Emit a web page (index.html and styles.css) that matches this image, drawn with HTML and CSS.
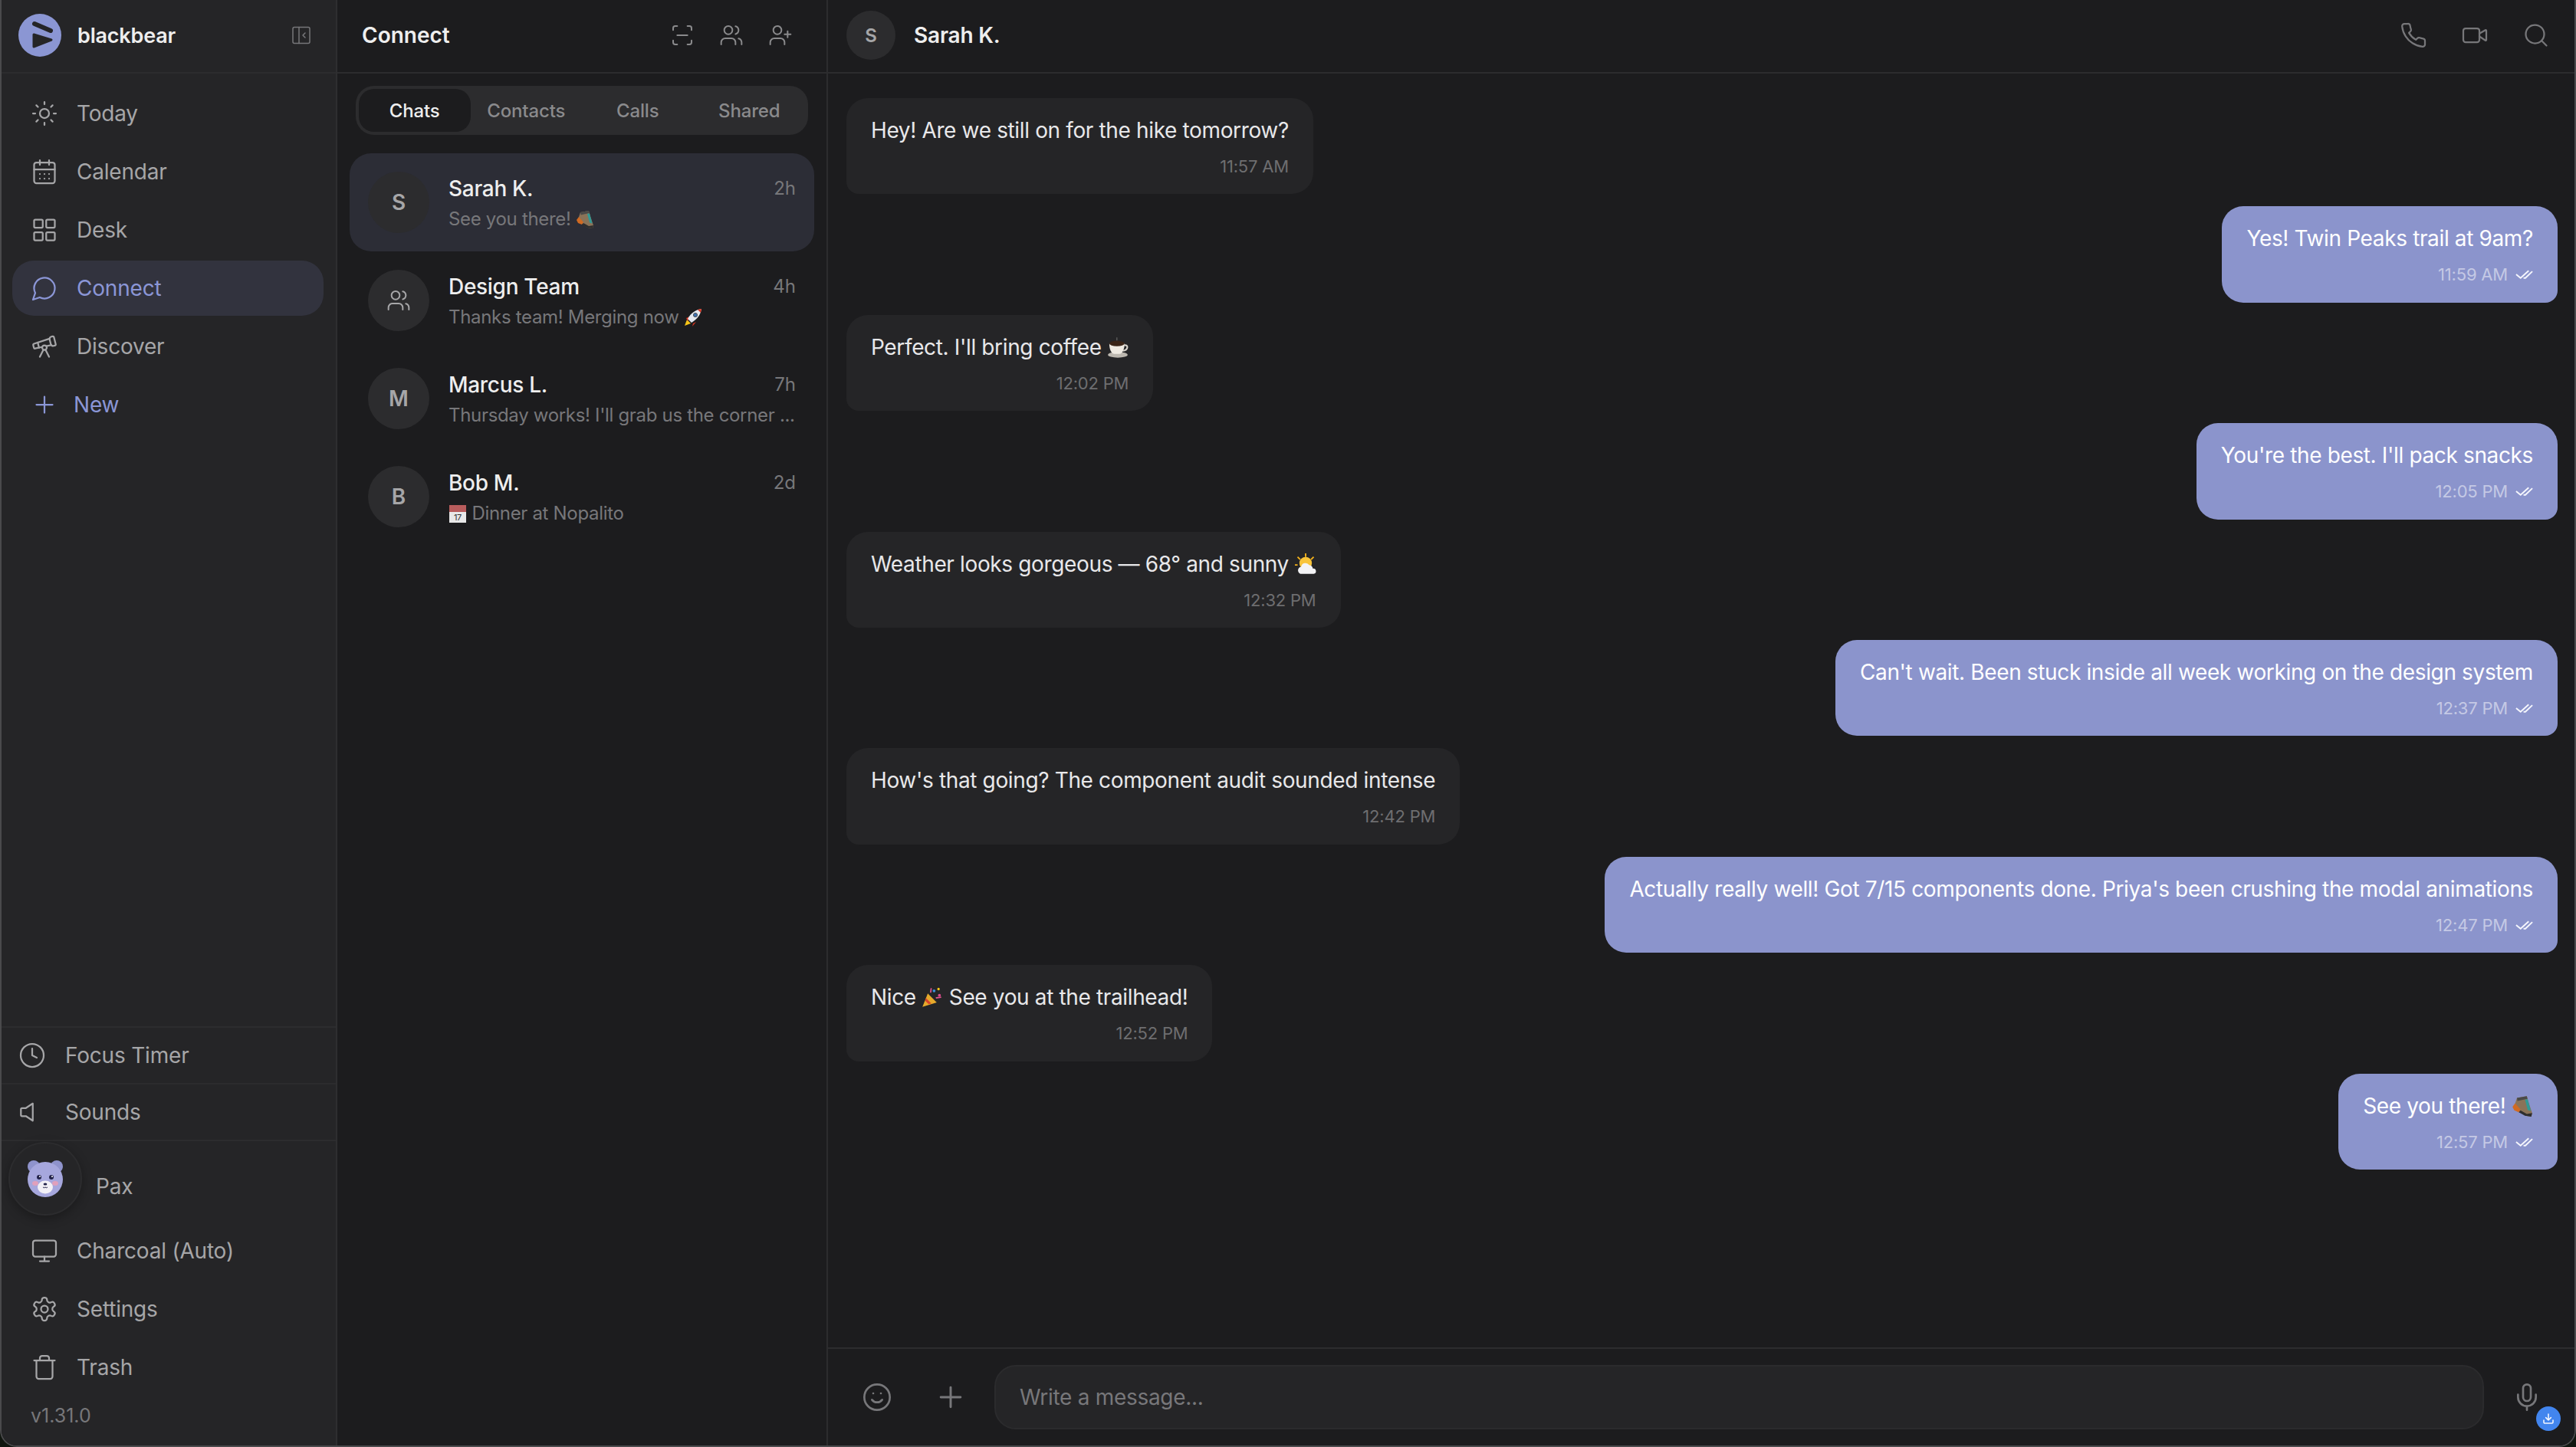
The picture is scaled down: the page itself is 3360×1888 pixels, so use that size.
FILE: index.html
```html
<!DOCTYPE html>
<html lang="en">

<head>
    <meta charset="UTF-8">
    <title>blackbear</title>
    <link rel="stylesheet" href="styles.css">
</head>

<body>
    <!-- icon sprite -->
    <svg class="sprite" xmlns="http://www.w3.org/2000/svg">
        <symbol id="i-sun" viewBox="0 0 24 24"><circle cx="12" cy="12" r="4"/><path d="M12 2v2M12 20v2M4.93 4.93l1.41 1.41M17.66 17.66l1.41 1.41M2 12h2M20 12h2M6.34 17.66l-1.41 1.41M19.07 4.93l-1.41 1.41"/></symbol>
        <symbol id="i-calendar" viewBox="0 0 24 24"><path d="M8 2v4M16 2v4M3 10h18"/><rect x="3" y="4" width="18" height="18" rx="2"/><path d="M8 14h.01M12 14h.01M16 14h.01M8 18h.01M12 18h.01M16 18h.01"/></symbol>
        <symbol id="i-grid" viewBox="0 0 24 24"><rect x="3" y="3" width="7.5" height="7" rx="1"/><rect x="13.5" y="3" width="7.5" height="7" rx="1"/><rect x="3" y="14" width="7.5" height="7" rx="1"/><rect x="13.5" y="14" width="7.5" height="7" rx="1"/></symbol>
        <symbol id="i-chat" viewBox="0 0 24 24"><path d="M7.9 20A9 9 0 1 0 4 16.1L2 22Z"/></symbol>
        <symbol id="i-telescope" viewBox="0 0 24 24"><path d="m10.065 12.493-6.18 1.318a.934.934 0 0 1-1.108-.702l-.537-2.15a1.07 1.07 0 0 1 .691-1.265l13.504-4.44"/><path d="m13.56 11.747 4.332-.924"/><path d="m16 21-3.105-6.21"/><path d="M16.485 5.94a2 2 0 0 1 1.455-2.425l1.09-.272a1 1 0 0 1 1.212.727l1.515 6.06a1 1 0 0 1-.727 1.213l-1.09.272a2 2 0 0 1-2.425-1.455z"/><path d="m6.158 8.633 1.114 4.456"/><path d="m8 21 3.105-6.21"/><circle cx="12" cy="13" r="2"/></symbol>
        <symbol id="i-plus" viewBox="0 0 24 24"><path d="M5 12h14M12 5v14"/></symbol>
        <symbol id="i-clock" viewBox="0 0 24 24"><circle cx="12" cy="12" r="10"/><path d="M12 6v6l4 2"/></symbol>
        <symbol id="i-speaker" viewBox="0 0 24 24"><path d="M12.5 4.5 6.5 8.5H3.2a1 1 0 0 0-1 1v5a1 1 0 0 0 1 1h3.3l6 4z"/></symbol>
        <symbol id="i-monitor" viewBox="0 0 24 24"><rect x="2" y="3" width="20" height="14" rx="2"/><path d="M8 21h8M12 17v4"/></symbol>
        <symbol id="i-settings" viewBox="0 0 24 24"><path d="M12.22 2h-.44a2 2 0 0 0-2 2v.18a2 2 0 0 1-1 1.73l-.43.25a2 2 0 0 1-2 0l-.15-.08a2 2 0 0 0-2.73.73l-.22.38a2 2 0 0 0 .73 2.73l.15.1a2 2 0 0 1 1 1.72v.51a2 2 0 0 1-1 1.74l-.15.09a2 2 0 0 0-.73 2.73l.22.38a2 2 0 0 0 2.73.73l.15-.08a2 2 0 0 1 2 0l.43.25a2 2 0 0 1 1 1.73V20a2 2 0 0 0 2 2h.44a2 2 0 0 0 2-2v-.18a2 2 0 0 1 1-1.73l.43-.25a2 2 0 0 1 2 0l.15.08a2 2 0 0 0 2.73-.73l.22-.39a2 2 0 0 0-.73-2.73l-.15-.08a2 2 0 0 1-1-1.74v-.5a2 2 0 0 1 1-1.74l.15-.09a2 2 0 0 0 .73-2.73l-.22-.38a2 2 0 0 0-2.73-.73l-.15.08a2 2 0 0 1-2 0l-.43-.25a2 2 0 0 1-1-1.73V4a2 2 0 0 0-2-2z"/><circle cx="12" cy="12" r="3"/></symbol>
        <symbol id="i-trash" viewBox="0 0 24 24"><path d="M3 6h18M19 6v14a2 2 0 0 1-2 2H7a2 2 0 0 1-2-2V6M8 6V4a2 2 0 0 1 2-2h4a2 2 0 0 1 2 2v2"/></symbol>
        <symbol id="i-collapse" viewBox="0 0 24 24"><rect x="1" y="1.5" width="22" height="21" rx="2"/><path d="M9 1.5v21M17 9l-3 3 3 3"/></symbol>
        <symbol id="i-scan" viewBox="0 0 24 24"><path d="M3 7V5a2 2 0 0 1 2-2h2M17 3h2a2 2 0 0 1 2 2v2M21 17v2a2 2 0 0 1-2 2h-2M7 21H5a2 2 0 0 1-2-2v-2M7 12h10"/></symbol>
        <symbol id="i-users" viewBox="0 0 24 24"><path d="M16 21v-2a4 4 0 0 0-4-4H6a4 4 0 0 0-4 4v2"/><circle cx="9" cy="7" r="4"/><path d="M22 21v-2a4 4 0 0 0-3-3.87M16 3.13a4 4 0 0 1 0 7.75"/></symbol>
        <symbol id="i-user-plus" viewBox="0 0 24 24"><path d="M16 21v-2a4 4 0 0 0-4-4H6a4 4 0 0 0-4 4v2"/><circle cx="9" cy="7" r="4"/><path d="M19 8v6M22 11h-6"/></symbol>
        <symbol id="i-phone" viewBox="0 0 24 24"><path d="M22 16.92v3a2 2 0 0 1-2.18 2 19.79 19.79 0 0 1-8.63-3.07 19.5 19.5 0 0 1-6-6 19.79 19.79 0 0 1-3.07-8.67A2 2 0 0 1 4.11 2h3a2 2 0 0 1 2 1.72 12.84 12.84 0 0 0 .7 2.81 2 2 0 0 1-.45 2.11L8.09 9.91a16 16 0 0 0 6 6l1.27-1.27a2 2 0 0 1 2.11-.45 12.84 12.84 0 0 0 2.81.7A2 2 0 0 1 22 16.92z"/></symbol>
        <symbol id="i-video" viewBox="0 0 24 24"><path d="m16 13 5.223 3.482a.5.5 0 0 0 .777-.416V7.87a.5.5 0 0 0-.752-.432L16 10.5"/><rect x="2" y="6" width="14" height="12" rx="2"/></symbol>
        <symbol id="i-search" viewBox="0 0 24 24"><circle cx="11" cy="11" r="8"/><path d="m21 21-4.3-4.3"/></symbol>
        <symbol id="i-smile" viewBox="0 0 24 24"><circle cx="12" cy="12" r="10"/><path d="M8 14s1.5 2 4 2 4-2 4-2M9 9h.01M15 9h.01"/></symbol>
        <symbol id="i-mic" viewBox="0 0 24 24"><path d="M12 2a3 3 0 0 0-3 3v7a3 3 0 0 0 6 0V5a3 3 0 0 0-3-3Z"/><path d="M19 10v2a7 7 0 0 1-14 0v-2M12 19v3"/></symbol>
        <symbol id="i-checks" viewBox="0 0 24 14"><path d="M1 7l6 5L18 2M11 12h2.5L23 3"/></symbol>
        <symbol id="i-download" viewBox="0 0 24 24"><path d="M21 15v4a2 2 0 0 1-2 2H5a2 2 0 0 1-2-2v-4M7 10l5 5 5-5M12 15V3"/></symbol>

        <!-- small picture emoji -->
        <symbol id="e-boot" viewBox="0 0 24 24">
            <path d="M6 3l11-2 2 7 4 12-1 4-7-1L3 14 4 9z" fill="#8a7358"/>
            <path d="M6 3l11-2 .8 3L6.5 6.5z" fill="#4a4a48"/>
            <path d="M15 5l3-.5 3.5 13-3.5-1z" fill="#2f9a96"/>
            <path d="M4 9 1 13l2 4 5 2 2-3z" fill="#d06a22"/>
            <path d="M8 19l7 4 7 1 1-4-6 1-7-4z" fill="#2e2e2e"/>
        </symbol>
        <symbol id="e-rocket" viewBox="0 0 24 24">
            <path d="M1 23l3-8 5 5z" fill="#f5c518"/>
            <path d="M3 13l5-2-3 6zM12 20l-1 4 5-6z" fill="#d8331f"/>
            <path d="M5 14C9 6 16 2 23 1c-1 7-5 13-13 18z" fill="#e4e8f0"/>
            <path d="M18 2l5-1-1 5z" fill="#d8331f"/>
            <circle cx="15" cy="9" r="2.6" fill="#3c6fb0" stroke="#555" stroke-width="1"/>
        </symbol>
        <symbol id="e-calendar" viewBox="0 0 24 24">
            <rect x="1" y="1" width="22" height="23" fill="#e8e8e8"/>
            <rect x="1" y="1" width="22" height="9" fill="#b85c5c"/>
            <text x="12" y="21" font-size="11" font-family="Inter, sans-serif" fill="#333" text-anchor="middle">17</text>
        </symbol>
        <symbol id="e-coffee" viewBox="0 0 24 24">
            <ellipse cx="12" cy="20.5" rx="11" ry="3.2" fill="#bdb8b0"/>
            <path d="M2.5 8h17c0 7-2.500 11.500-5.500 11.500H8C5 19.500 2.500 15 2.500 8z" fill="#efeae2"/>
            <ellipse cx="11" cy="8" rx="8.500" ry="3" fill="#3a2417"/>
            <path d="M19 10c5-1.500 5 5-1 6" fill="none" stroke="#d8d3cb" stroke-width="1.800"/>
            <path d="M11 4.500V1" stroke="#666" stroke-width="1"/>
        </symbol>
        <symbol id="e-sun-cloud" viewBox="0 0 24 24">
            <path d="M12 0v4M3 4l3 3M21 4l-3 3M0 13h3" stroke="#f5b21a" stroke-width="1.6"/>
            <circle cx="12" cy="11" r="7" fill="#f8c43a"/>
            <path d="M8 23a4 4 0 0 1-1-8 5 5 0 0 1 9-2 4.5 4.5 0 0 1 4 4 3 3 0 0 1 1 6z" fill="#f3f3f5"/>
        </symbol>
        <symbol id="e-party" viewBox="0 0 24 24">
            <path d="M1 23l6-15 10 10z" fill="#e6a92b"/>
            <path d="M5 13l6 6-3 1-4-4z" fill="#d8432a"/>
            <circle cx="14" cy="5" r="1.6" fill="#3c8fd8"/>
            <circle cx="20" cy="10" r="1.6" fill="#d84a8a"/>
            <circle cx="19" cy="3" r="1.4" fill="#f5c518"/>
            <path d="M10 7c1-2 0-3 1-5M16 13c2-1 3 0 6-1" fill="none" stroke="#e2548f" stroke-width="1.5"/>
        </symbol>
    </svg>

    <div class="app">
        <!-- left nav -->
        <aside class="sidebar">
            <div class="brand">
                <svg class="brand-logo" viewBox="0 0 56 56">
                    <circle cx="28" cy="28" r="28" fill="#8b96d3"/>
                    <path d="M20 27 43 34 20 43z" fill="#252527" stroke="#252527" stroke-width="3" stroke-linejoin="round"/>
                    <path d="M21 13 42 22" fill="none" stroke="#252527" stroke-width="6" stroke-linecap="round"/>
                </svg>
                <span class="brand-name">blackbear</span>
                <svg class="icon collapse-icon"><use href="#i-collapse"/></svg>
            </div>

            <nav class="nav">
                <a class="nav-item"><svg class="icon"><use href="#i-sun"/></svg>Today</a>
                <a class="nav-item"><svg class="icon"><use href="#i-calendar"/></svg>Calendar</a>
                <a class="nav-item"><svg class="icon"><use href="#i-grid"/></svg>Desk</a>
                <a class="nav-item active"><svg class="icon"><use href="#i-chat"/></svg>Connect</a>
                <a class="nav-item"><svg class="icon"><use href="#i-telescope"/></svg>Discover</a>
                <a class="nav-item new-item"><svg class="icon"><use href="#i-plus"/></svg>New</a>
            </nav>

            <div class="side-bottom">
                <div class="tool-row"><svg class="icon"><use href="#i-clock"/></svg>Focus Timer</div>
                <div class="tool-row"><svg class="icon"><use href="#i-speaker"/></svg>Sounds</div>
                <div class="pet-row">
                    <div class="pet-circle">
                        <svg class="pet" viewBox="0 0 48 50">
                            <circle cx="9" cy="9" r="8" fill="#8f93cc"/>
                            <circle cx="39" cy="9" r="8" fill="#8f93cc"/>
                            <circle cx="24" cy="26" r="23" fill="#a6a7dd"/>
                            <ellipse cx="11" cy="31" rx="4" ry="3" fill="#e0a0bc"/>
                            <ellipse cx="37" cy="31" rx="4" ry="3" fill="#e0a0bc"/>
                            <ellipse cx="24" cy="36" rx="10" ry="8.500" fill="#f2f0f6"/>
                            <circle cx="16" cy="23" r="3" fill="#23234a"/>
                            <circle cx="32" cy="23" r="3" fill="#23234a"/>
                            <circle cx="17" cy="22" r="1" fill="#ffffff"/>
                            <circle cx="33" cy="22" r="1" fill="#ffffff"/>
                            <ellipse cx="24" cy="32" rx="2.400" ry="1.500" fill="#23234a"/>
                            <path d="M21 36q1.500 1.500 3 0q1.500 1.500 3 0" fill="none" stroke="#23234a" stroke-width="1"/>
                        </svg>
                    </div>
                    <span class="pet-name">Pax</span>
                </div>
                <div class="side-links">
                    <a class="nav-item"><svg class="icon"><use href="#i-monitor"/></svg>Charcoal (Auto)</a>
                    <a class="nav-item"><svg class="icon"><use href="#i-settings"/></svg>Settings</a>
                    <a class="nav-item"><svg class="icon"><use href="#i-trash"/></svg>Trash</a>
                </div>
                <div class="version">v1.31.0</div>
            </div>
        </aside>

        <!-- conversation list -->
        <section class="list-panel">
            <div class="panel-head">
                <h2>Connect</h2>
                <div class="head-icons">
                    <svg class="icon"><use href="#i-scan"/></svg>
                    <svg class="icon"><use href="#i-users"/></svg>
                    <svg class="icon"><use href="#i-user-plus"/></svg>
                </div>
            </div>
            <div class="tabs">
                <div class="tab active">Chats</div>
                <div class="tab">Contacts</div>
                <div class="tab">Calls</div>
                <div class="tab">Shared</div>
            </div>
            <div class="convos">
                <div class="convo selected">
                    <div class="avatar">S</div>
                    <div class="convo-body">
                        <div class="convo-top"><span class="convo-name">Sarah K.</span><span class="convo-time">2h</span></div>
                        <div class="convo-last">See you there! <svg class="emoji"><use href="#e-boot"/></svg></div>
                    </div>
                </div>
                <div class="convo">
                    <div class="avatar"><svg class="icon"><use href="#i-users"/></svg></div>
                    <div class="convo-body">
                        <div class="convo-top"><span class="convo-name">Design Team</span><span class="convo-time">4h</span></div>
                        <div class="convo-last">Thanks team! Merging now <svg class="emoji"><use href="#e-rocket"/></svg></div>
                    </div>
                </div>
                <div class="convo">
                    <div class="avatar">M</div>
                    <div class="convo-body">
                        <div class="convo-top"><span class="convo-name">Marcus L.</span><span class="convo-time">7h</span></div>
                        <div class="convo-last">Thursday works! I'll grab us the corner ...</div>
                    </div>
                </div>
                <div class="convo">
                    <div class="avatar">B</div>
                    <div class="convo-body">
                        <div class="convo-top"><span class="convo-name">Bob M.</span><span class="convo-time">2d</span></div>
                        <div class="convo-last"><svg class="emoji"><use href="#e-calendar"/></svg> Dinner at Nopalito</div>
                    </div>
                </div>
            </div>
        </section>

        <!-- chat -->
        <section class="chat">
            <div class="chat-head">
                <div class="avatar small">S</div>
                <span class="chat-name">Sarah K.</span>
                <div class="chat-actions">
                    <svg class="icon"><use href="#i-phone"/></svg>
                    <svg class="icon"><use href="#i-video"/></svg>
                    <svg class="icon"><use href="#i-search"/></svg>
                </div>
            </div>

            <div class="messages">
                <div class="msg in">
                    <p>Hey! Are we still on for the hike tomorrow?</p>
                    <div class="meta">11:57 AM</div>
                </div>
                <div class="msg out">
                    <p>Yes! Twin Peaks trail at 9am?</p>
                    <div class="meta">11:59 AM <svg class="checks"><use href="#i-checks"/></svg></div>
                </div>
                <div class="msg in">
                    <p>Perfect. I'll bring coffee <svg class="emoji big"><use href="#e-coffee"/></svg></p>
                    <div class="meta">12:02 PM</div>
                </div>
                <div class="msg out">
                    <p>You're the best. I'll pack snacks</p>
                    <div class="meta">12:05 PM <svg class="checks"><use href="#i-checks"/></svg></div>
                </div>
                <div class="msg in">
                    <p>Weather looks gorgeous — 68° and sunny <svg class="emoji big"><use href="#e-sun-cloud"/></svg></p>
                    <div class="meta">12:32 PM</div>
                </div>
                <div class="msg out">
                    <p>Can't wait. Been stuck inside all week working on the design system</p>
                    <div class="meta">12:37 PM <svg class="checks"><use href="#i-checks"/></svg></div>
                </div>
                <div class="msg in">
                    <p>How's that going? The component audit sounded intense</p>
                    <div class="meta">12:42 PM</div>
                </div>
                <div class="msg out">
                    <p>Actually really well! Got 7/15 components done. Priya's been crushing the modal animations</p>
                    <div class="meta">12:47 PM <svg class="checks"><use href="#i-checks"/></svg></div>
                </div>
                <div class="msg in">
                    <p>Nice <svg class="emoji big"><use href="#e-party"/></svg> See you at the trailhead!</p>
                    <div class="meta">12:52 PM</div>
                </div>
                <div class="msg out">
                    <p>See you there! <svg class="emoji big"><use href="#e-boot"/></svg></p>
                    <div class="meta">12:57 PM <svg class="checks"><use href="#i-checks"/></svg></div>
                </div>
            </div>

            <div class="composer">
                <svg class="icon composer-icon"><use href="#i-smile"/></svg>
                <svg class="icon composer-icon composer-plus"><use href="#i-plus"/></svg>
                <div class="composer-input">Write a message...</div>
                <div class="mic-wrap">
                    <svg class="icon composer-icon"><use href="#i-mic"/></svg>
                    <span class="update-badge"><svg class="icon"><use href="#i-download"/></svg></span>
                </div>
            </div>
        </section>
    </div>
</body>

</html>
```

FILE: styles.css
```css
* {
    box-sizing: border-box;
}

html,
body {
    margin: 0;
    height: 100%;
}

body {
    background: #10160f;
    font-family: Inter, "Noto Sans", sans-serif;
    font-size: 28px;
    color: #e8e8ea;
    overflow: hidden;
}

.sprite {
    display: none;
}

.icon {
    width: 36px;
    height: 36px;
    flex: none;
    fill: none;
    stroke: currentColor;
    stroke-width: 1.5;
    stroke-linecap: round;
    stroke-linejoin: round;
}

.app {
    display: grid;
    grid-template-columns: 438px 640px 1fr;
    height: 1888px;
    border: 2px solid #4a4a4c;
    border-top: none;
    border-radius: 0 0 22px 22px;
    overflow: hidden;
}

/* sidebar */
.sidebar {
    display: flex;
    flex-direction: column;
    background: #252527;
    border-right: 2px solid #2e2e30;
}

.brand {
    display: flex;
    align-items: center;
    height: 96px;
    padding: 0 33px 2px 22px;
    border-bottom: 2px solid #2c2c2e;
    flex: none;
}

.brand-logo {
    width: 56px;
    height: 56px;
    flex: none;
}

.brand-name {
    margin-left: 21px;
    font-weight: 600;
    font-size: 27px;
    letter-spacing: -0.2px;
    color: #eeeeee;
}

.collapse-icon {
    width: 24px;
    height: 24px;
    margin-left: auto;
    color: #77777a;
    stroke-width: 1.5;
}

.nav {
    display: flex;
    flex-direction: column;
    gap: 4px;
    padding: 16px 16px 0 14px;
}

.nav-item {
    display: flex;
    align-items: center;
    gap: 24px;
    height: 72px;
    padding: 0 24px;
    border-radius: 28px;
    color: #a6a6a8;
    font-size: 28px;
    letter-spacing: -0.2px;
}

.nav-item.active {
    background: #32333e;
    color: #8b96d6;
}

.new-item {
    color: #8b96d6;
    gap: 20px;
}

.side-bottom {
    margin-top: auto;
    display: flex;
    flex-direction: column;
}

.tool-row {
    display: flex;
    align-items: center;
    gap: 25px;
    height: 74px;
    padding: 0 22px;
    border-top: 2px solid #2c2c2e;
    color: #a6a6a8;
    font-size: 28px;
    letter-spacing: -0.2px;
}

.pet-row {
    display: flex;
    align-items: flex-start;
    height: 109px;
    padding-left: 9px;
    border-top: 2px solid #2c2c2e;
}

.pet-circle {
    display: flex;
    align-items: center;
    justify-content: center;
    width: 96px;
    height: 96px;
    margin-top: 1px;
    border-radius: 50%;
    background: #252527;
    border: 2px solid #2c2c2e;
    box-shadow: 0 4px 14px rgba(0, 0, 0, 0.3);
}

.pet {
    width: 48px;
    height: 50px;
}

.pet-name {
    margin-left: 18px;
    margin-top: 41px;
    line-height: 36px;
    letter-spacing: -0.2px;
    color: #a6a6a8;
}

.side-links {
    display: flex;
    flex-direction: column;
    gap: 4px;
    padding: 0 16px 0 14px;
}

.version {
    height: 66px;
    padding: 12px 38px 0;
    font-size: 25px;
    color: #77777a;
}

/* list panel */
.list-panel {
    background: #1c1c1e;
    border-right: 2px solid #2c2c2e;
    display: flex;
    flex-direction: column;
}

.panel-head {
    display: flex;
    align-items: center;
    justify-content: space-between;
    height: 96px;
    padding: 0 44px 2px 32px;
    border-bottom: 2px solid #2c2c2e;
}

.panel-head h2 {
    margin: 0;
    font-size: 28px;
    font-weight: 600;
    color: #eeeeee;
}

.head-icons {
    display: flex;
    gap: 32px;
    color: #8a8a8c;
}

.head-icons .icon {
    width: 32px;
    height: 32px;
}

.tabs {
    display: flex;
    margin: 16px 24px 24px 24px;
    height: 64px;
    padding: 4px;
    background: #2c2c2e;
    border-radius: 24px;
}

.tab {
    flex: 1;
    display: flex;
    align-items: center;
    justify-content: center;
    border-radius: 20px;
    font-size: 24px;
    font-weight: 500;
    letter-spacing: -0.15px;
    color: #8a8a8c;
}

.tab.active {
    background: #1c1c1e;
    color: #eeeeee;
}

.convos {
    padding: 0 16px;
}

.convo {
    display: flex;
    align-items: center;
    gap: 25px;
    height: 128px;
    padding: 0 24px;
    border-radius: 28px;
}

.convo.selected {
    background: #2c2d36;
}

.avatar {
    display: flex;
    align-items: center;
    justify-content: center;
    width: 80px;
    height: 80px;
    flex: none;
    border-radius: 50%;
    background: #2c2c2e;
    color: #a6a6a8;
    font-size: 28px;
    font-weight: 600;
}

.avatar .icon {
    width: 32px;
    height: 32px;
}

.avatar.small {
    width: 64px;
    height: 64px;
    font-size: 24px;
}

.convo-body {
    flex: 1;
    min-width: 0;
    margin-top: 4px;
}

.convo-top {
    display: flex;
    justify-content: space-between;
    align-items: center;
    line-height: 36px;
}

.convo-name {
    font-size: 28px;
    font-weight: 500;
    letter-spacing: -0.3px;
    color: #eeeeee;
}

.convo-time {
    font-size: 24px;
    color: #77777a;
}

.convo-last {
    margin-top: 4px;
    height: 36px;
    line-height: 36px;
    font-size: 24px;
    letter-spacing: -0.32px;
    color: #77777a;
    white-space: nowrap;
}

.emoji {
    width: 24px;
    height: 24px;
    vertical-align: -4px;
}

.emoji.big {
    width: 28px;
    height: 28px;
    vertical-align: -4px;
}

/* chat */
.chat {
    display: flex;
    flex-direction: column;
    min-width: 0;
    background: #1c1c1e;
}

.chat-head {
    display: flex;
    align-items: center;
    gap: 24px;
    height: 96px;
    padding: 0 32px 2px 24px;
    border-bottom: 2px solid #2c2c2e;
    flex: none;
}

.chat-name {
    font-weight: 600;
    font-size: 28px;
    letter-spacing: -0.2px;
    color: #eeeeee;
}

.chat-actions {
    display: flex;
    gap: 44px;
    margin-left: auto;
    color: #77777a;
}

.messages {
    flex: 1;
    display: flex;
    flex-direction: column;
    gap: 16px;
    padding: 32px 22px 0 24px;
}

.msg {
    padding: 24px 32px 21.4px;
    border-radius: 28px 28px 28px 16px;
    align-self: flex-start;
}

.msg p {
    margin: 0;
    height: 36px;
    font-size: 28px;
    line-height: 36px;
    letter-spacing: -0.36px;
    white-space: nowrap;
}

.msg.in {
    background: #252527;
    color: #e8e8ea;
}

.msg.out {
    align-self: flex-end;
    background: #8b94cc;
    color: #ffffff;
    border-radius: 28px 28px 16px 28px;
}

.meta {
    display: flex;
    align-items: center;
    justify-content: flex-end;
    gap: 10px;
    margin-top: 14px;
    height: 30px;
    font-size: 22px;
    letter-spacing: -0.2px;
    color: #6e6e70;
}

.msg.out .meta {
    color: rgba(255, 255, 255, 0.5);
}

.checks {
    width: 23px;
    height: 14px;
    fill: none;
    stroke: #f6f7fd;
    stroke-width: 2;
}

.composer {
    display: flex;
    align-items: center;
    height: 128px;
    padding: 0 42px 0 44px;
    border-top: 2px solid #2c2c2e;
    flex: none;
}

.composer-icon {
    width: 40px;
    height: 40px;
    color: #77777a;
    stroke-width: 1.6;
}

.composer-icon + .composer-icon {
    margin-left: 54px;
}

.composer-plus {
    width: 44px;
    height: 44px;
    margin-right: -2px;
}

.composer-input {
    flex: 1;
    display: flex;
    align-items: center;
    height: 84px;
    margin: 0 36px 0 37px;
    padding: 0 31px;
    background: #252527;
    border: 2px solid #2b2b2d;
    border-radius: 28px;
    font-size: 28px;
    letter-spacing: -0.3px;
    color: #77777a;
}

.mic-wrap {
    position: relative;
    display: flex;
}

/* download badge sits over the mic */
.update-badge {
    position: absolute;
    right: -24px;
    bottom: -24px;
    display: flex;
    align-items: center;
    justify-content: center;
    width: 32px;
    height: 32px;
    border-radius: 50%;
    background: #4285ee;
    color: #f2f5ff;
}

.update-badge .icon {
    width: 16px;
    height: 16px;
    stroke-width: 2.4;
}
```
